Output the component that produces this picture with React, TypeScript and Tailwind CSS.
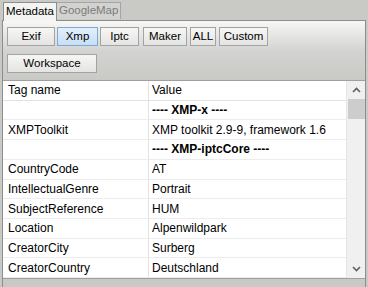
import React from 'react';

type Row = { tag: string; value: string; group?: boolean };

const rows: Row[] = [
  { tag: '', value: '---- XMP-x ----', group: true },
  { tag: 'XMPToolkit', value: 'XMP toolkit 2.9-9, framework 1.6' },
  { tag: '', value: '---- XMP-iptcCore ----', group: true },
  { tag: 'CountryCode', value: 'AT' },
  { tag: 'IntellectualGenre', value: 'Portrait' },
  { tag: 'SubjectReference', value: 'HUM' },
  { tag: 'Location', value: 'Alpenwildpark' },
  { tag: 'CreatorCity', value: 'Surberg' },
  { tag: 'CreatorCountry', value: 'Deutschland' },
];

const buttons = [
  { label: 'Exif', w: 'w-[48px]' },
  { label: 'Xmp', w: 'w-[41px]', active: true },
  { label: 'Iptc', w: 'w-[39px]' },
  { label: 'Maker', w: 'w-[44px]' },
  { label: 'ALL', w: 'w-[26px]' },
  { label: 'Custom', w: 'w-[49px]' },
];

function Btn({ label, w, active }: { label: string; w: string; active?: boolean }) {
  return (
    <div
      className={`${w} h-[19px] flex items-center justify-center border text-[11.5px] text-black ${
        active
          ? 'border-[#7ea9d4] bg-gradient-to-b from-[#e3f0fb] to-[#c6def4]'
          : 'border-[#a3a3a3] bg-gradient-to-b from-[#f6f6f5] to-[#e4e4e2]'
      }`}
    >
      {label}
    </div>
  );
}

export default function App() {
  return (
    <div
      className="w-[368px] h-[287px] bg-[#c9cac6] overflow-hidden"
      style={{ fontFamily: '"Liberation Sans", Arial, sans-serif' }}
    >
      {/* tabs */}
      <div className="flex pl-[3px] pt-[2px] h-[20px] items-end">
        <div className="relative z-10 h-[19px] -mb-[1px] px-[2px] flex items-center border border-b-0 border-[#8d8d8d] bg-[#f4f4f2] text-[11.5px] text-black">
          Metadata
        </div>
        <div className="h-[17px] mb-[1px] px-[2px] flex items-center border border-l-0 border-b-0 border-[#a5a5a5] bg-[#d2d3d0] text-[11.5px] text-[#7b7b7b]">
          GoogleMap
        </div>
      </div>

      {/* panel */}
      <div className="mx-[2px] h-[268px] border border-b-0 border-[#8d8d8d] bg-gradient-to-b from-[#f7f7f6] via-[#d3d4d1] via-[30px] to-[#c9cac6] to-[60px] flex flex-col">
        <div className="flex gap-[2px] pl-[4px] pt-[6px]">
          {buttons.slice(0, 3).map((b) => (
            <Btn key={b.label} {...b} />
          ))}
          <div className="flex gap-[3px] ml-[2px]">
            {buttons.slice(3).map((b) => (
              <Btn key={b.label} {...b} />
            ))}
          </div>
        </div>
        <div className="pl-[4px] pt-[8px]">
          <Btn label="Workspace" w="w-[90px]" />
        </div>

        {/* table */}
        <div className="mt-[7px] h-[199px] border-t border-b border-[#a0a0a0] bg-white flex">
          <div className="flex-1 flex flex-col text-[12px] text-black">
            <div className="flex h-[20px] border-b border-[#e2e2e2]">
              <div className="w-[146px] border-r border-[#e2e2e2] pl-[5px] flex items-center">Tag name</div>
              <div className="flex-1 pl-[3px] flex items-center">Value</div>
            </div>
            {rows.map((r, i) => (
              <div key={i} className="flex h-[20px] border-b border-[#ececec]">
                <div className="w-[146px] border-r border-[#e2e2e2] pl-[5px] flex items-center">{r.tag}</div>
                <div className={`flex-1 pl-[3px] flex items-center ${r.group ? 'font-bold' : ''}`}>
                  {r.value}
                </div>
              </div>
            ))}
          </div>
          {/* scrollbar */}
          <div className="w-[19px] bg-[#f0f0f0] border-l border-[#e6e6e6] flex flex-col items-center">
            <div className="h-[18px] flex items-center justify-center">
              <svg width="9" height="6" viewBox="0 0 9 6">
                <path d="M1 5 L4.5 1.5 L8 5" fill="none" stroke="#606060" strokeWidth="1.6" />
              </svg>
            </div>
            <div className="w-[17px] h-[20px] bg-[#cdcdcd]" />
            <div className="flex-1" />
            <div className="h-[18px] flex items-center justify-center">
              <svg width="9" height="6" viewBox="0 0 9 6">
                <path d="M1 1 L4.5 4.5 L8 1" fill="none" stroke="#606060" strokeWidth="1.6" />
              </svg>
            </div>
          </div>
        </div>
      </div>
    </div>
  );
}
